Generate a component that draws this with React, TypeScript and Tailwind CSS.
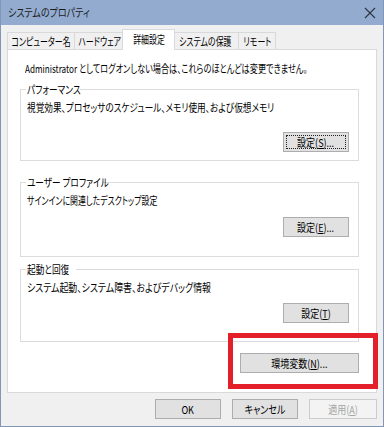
import React from 'react';
import clsx from 'clsx';

const jp = "font-['Noto_Sans_CJK_JP','Noto_Sans',sans-serif] [font-feature-settings:'palt']";

// Meiryo UI is much narrower than Noto Sans CJK, so text runs are squeezed horizontally
const Sq: React.FC<{ children: React.ReactNode; className?: string }> = ({ children, className }) => (
  <span className={clsx('inline-block whitespace-nowrap', className ?? 'origin-left scale-x-[0.785]')}>{children}</span>
);

type BtnProps = {
  children: React.ReactNode;
  className?: string;
  focused?: boolean;
  disabled?: boolean;
};

const Btn: React.FC<BtnProps> = ({ children, className, focused, disabled }) => (
  <div
    className={clsx(
      'flex h-[20px] items-center justify-center border text-[11px] leading-none',
      disabled
        ? 'border-[#cccccc] bg-[#f3f3f3] text-[#a6a6a6]'
        : 'border-[#adadad] bg-[#e1e1e1] text-black',
      focused && 'border-[#5a9bdc] outline-1 outline-offset-[-4px] outline-dotted outline-[#222]',
      className
    )}
  >
    <Sq className="origin-center scale-x-[0.82]">{children}</Sq>
  </div>
);

type GroupProps = {
  title: string;
  legendW: string;
  text: string;
  textScale?: string;
  button: React.ReactNode;
  textGap: string;
  buttonGap: string;
  className: string;
};

const Group: React.FC<GroupProps> = ({ title, legendW, text, textScale, button, textGap, buttonGap, className }) => (
  <fieldset className={clsx('ml-[12px] w-[339px] border border-[#dcdcdc]', className)}>
    <legend className={clsx('ml-[5px] px-[1px] text-[11px] leading-[16px] text-black', legendW)}>
      <Sq>{title}</Sq>
    </legend>
    <div className={clsx('pl-[6px] text-[11px] leading-[16px] text-black', textGap)}>
      <Sq className={textScale}>{text}</Sq>
    </div>
    <div className={clsx('flex justify-end pr-[9px]', buttonGap)}>{button}</div>
  </fieldset>
);

const tabs = [
  { label: 'コンピューター名', w: 'w-[67px]' },
  { label: 'ハードウェア', w: 'w-[50px]' },
  { label: '詳細設定', w: 'w-[53px]', active: true },
  { label: 'システムの保護', w: 'w-[65px]' },
  { label: 'リモート', w: 'w-[38px]' },
];

export default function App() {
  return (
    <div className={clsx('relative flex h-[427px] w-[384px] flex-col overflow-hidden border-x border-b border-[#8297b8] bg-[#f0f0f0]', jp)}>
      {/* Title bar */}
      <div className="-mx-px flex h-[25px] shrink-0 items-center justify-between bg-[#93abcf] pl-[8px] pr-[7px]">
        <span className="text-[11px] leading-none text-[#1b1b1b]">
          <Sq className="origin-left scale-x-[0.82]">システムのプロパティ</Sq>
        </span>
        <svg width="12" height="12" viewBox="0 0 12 12" className="mr-[1px]">
          <path d="M1 1 L11 11 M11 1 L1 11" stroke="#2c3440" strokeWidth="1.1" fill="none" />
        </svg>
      </div>

      {/* Tabs */}
      <div className="mt-[4px] flex h-[20px] items-end pl-[6px]">
        {tabs.map((t, i) => (
          <div
            key={t.label}
            className={clsx(
              'flex items-center justify-center border-t border-l border-[#d9d9d9] text-[11px] leading-none text-black',
              t.w,
              t.active
                ? 'relative z-10 -mx-[2px] mb-[-1px] h-[21px] border-r bg-white pb-[1px]'
                : 'h-[17px] bg-[#f0f0f0]',
              i === tabs.length - 1 && 'border-r',
              i === 3 && 'border-l-0'
            )}
          >
            <Sq className="origin-center scale-x-[0.72]">{t.label}</Sq>
          </div>
        ))}
      </div>

      {/* Panel */}
      <div className="ml-[6px] flex h-[344px] w-[370px] flex-col border border-[#d9d9d9] bg-white">
        <div className="mt-[10px] pl-[17px] text-[11px] leading-[16px] text-black">
          <Sq className="origin-left scale-x-[0.74]">
            Administrator としてログオンしない場合は、これらのほとんどは変更できません。
          </Sq>
        </div>

        <Group
          title="パフォーマンス"
          legendW="w-[54px]"
          text="視覚効果、プロセッサのスケジュール、メモリ使用、および仮想メモリ"
          textGap="mt-[2px]"
          buttonGap="mt-[17px]"
          className="mt-[5px] h-[80px]"
          button={
            <Btn focused className="w-[66px]">
              設定(<u>S</u>)...
            </Btn>
          }
        />

        <Group
          title="ユーザー プロファイル"
          legendW="w-[76px]"
          text="サインインに関連したデスクトップ設定"
          textScale="origin-left scale-x-[0.72]"
          textGap="mt-[2px]"
          buttonGap="mt-[9px]"
          className="mt-[13px] h-[83px]"
          button={
            <Btn className="w-[66px]">
              設定(<u>E</u>)...
            </Btn>
          }
        />

        <Group
          title="起動と回復"
          legendW="w-[50px]"
          text="システム起動、システム障害、およびデバッグ情報"
          textScale="origin-left scale-x-[0.81]"
          textGap="mt-[2px]"
          buttonGap="mt-[8px]"
          className="mt-[4px] h-[81px]"
          button={
            <Btn className="w-[66px]">
              設定(<u>T</u>)
            </Btn>
          }
        />

        <div className="mt-[11px] flex justify-end pr-[17px]">
          <Btn className="w-[119px]">
            環境変数(<u>N</u>)...
          </Btn>
        </div>
      </div>

      {/* Bottom buttons */}
      <div className="mt-[6px] flex justify-end gap-[11px] pr-[6px]">
        <Btn className="w-[66px]">OK</Btn>
        <Btn className="w-[66px]">キャンセル</Btn>
        <Btn disabled className="w-[68px]">
          適用(<u>A</u>)
        </Btn>
      </div>

      {/* Red highlight annotation */}
      <div className="pointer-events-none absolute left-[227px] top-[333px] h-[56px] w-[150px] border-[5px] border-[#e3202a]" />
    </div>
  );
}
